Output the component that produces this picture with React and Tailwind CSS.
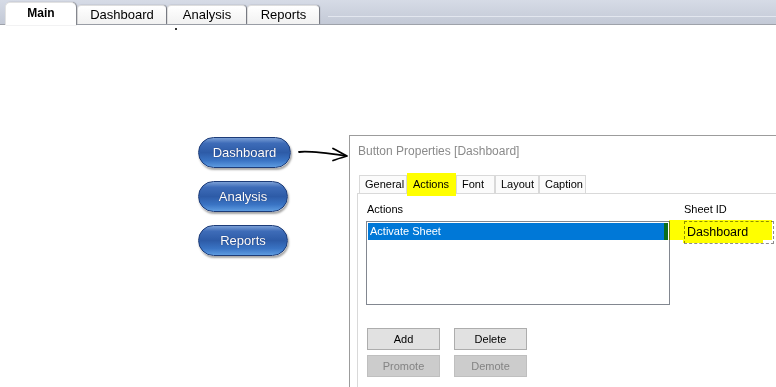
import React from "react";

function TopTab({ label, active, w }) {
  if (active) {
    return (
      <div
        className={`relative z-10 ${w} h-[23px] mb-[-1px] rounded-t-[5px] bg-white border-l border-t border-[#e2e2e2] shadow-[1px_0_1px_#7d7f86] flex items-center justify-center text-[12px] font-bold text-black pb-[2px]`}
      >
        {label}
      </div>
    );
  }
  return (
    <div
      className={`${w} h-[19px] rounded-t-[4px] bg-[linear-gradient(to_bottom,#ffffff,#f1f1f1)] border-l border-t border-[#dedede] shadow-[1px_0_1px_#6e7078] flex items-center justify-center text-[13px] text-black`}
    >
      {label}
    </div>
  );
}

function Pill({ label, w }) {
  return (
    <div
      className={`${w} h-[31px] rounded-full border border-[#1d3c78] bg-[linear-gradient(to_bottom,#7a9fd6_0%,#3e6cb8_18%,#2d5ba7_50%,#3a74c4_78%,#5d9be0_100%)] shadow-[1px_2px_2px_rgba(0,0,0,0.35)] flex items-center justify-center text-[13px] text-white [text-shadow:0_0_1px_rgba(0,0,40,0.6)]`}
    >
      {label}
    </div>
  );
}

function DlgTab({ label, w, selected }) {
  if (selected) {
    return (
      <div
        className={`relative z-10 ${w} h-[23px] mb-[-3px] bg-[#ffff00] flex items-start pt-[3px] pl-[6px] text-[11px] text-black`}
      >
        {label}
      </div>
    );
  }
  return (
    <div
      className={`${w} h-[18px] border-l border-t border-r border-[#d9d9d9] bg-[#fbfbfb] flex items-center pl-[5px] text-[11px] text-black`}
    >
      {label}
    </div>
  );
}

function Btn({ label, disabled }) {
  return (
    <div
      className={
        disabled
          ? "w-[73px] h-[22px] border border-[#bfbfbf] bg-[#cccccc] flex items-center justify-center text-[11px] text-[#838383]"
          : "w-[73px] h-[22px] border border-[#adadad] bg-[#e1e1e1] flex items-center justify-center text-[11px] text-black"
      }
    >
      {label}
    </div>
  );
}

export default function App() {
  return (
    <div className="relative w-[776px] h-[387px] overflow-hidden bg-white font-['Liberation_Sans',Arial,sans-serif]">
      {/* top tab bar */}
      <div className="h-[25px] flex items-end gap-[1px] pl-[5px] border-b border-[#9ea2aa] bg-[linear-gradient(to_bottom,#d6dbe6,#c3c9d6)]">
        <TopTab label="Main" active w="w-[71px]" />
        <TopTab label="Dashboard" w="w-[89px]" />
        <TopTab label="Analysis" w="w-[79px]" />
        <TopTab label="Reports" w="w-[72px]" />
        <div className="flex-1 self-start mt-[16px] ml-[8px] h-px bg-[#e3e7ef]" />
      </div>
      <div className="absolute left-[175px] top-[28px] w-[2px] h-[2px] bg-[#333]" />

      {/* main area */}
      <div className="flex pl-[198px] pt-[110px] h-[362px]">
        <div className="flex flex-col w-[92px] mt-[2px] gap-[13px]">
          <Pill label="Dashboard" w="w-[93px]" />
          <Pill label="Analysis" w="w-[90px]" />
          <Pill label="Reports" w="w-[90px]" />
        </div>

        <svg width="59" height="20" viewBox="0 0 59 20" className="mt-[12px] shrink-0">
          <path d="M9 5 C 20 3.5, 36 6, 56 9" fill="none" stroke="#000" strokeWidth="1.8" strokeLinecap="round" />
          <path d="M43 1.5 C 48 4, 52 6.5, 57 9 C 52 10.5, 47 12, 43 13.5" fill="none" stroke="#000" strokeWidth="1.8" strokeLinecap="round" strokeLinejoin="round" />
        </svg>

        {/* dialog */}
        <div className="flex-1 self-stretch border-l border-t border-[#9c9c9c] bg-white flex flex-col">
          <div className="h-[30px] pl-[8px] flex items-center text-[12px] text-[#8a8a8a]">
            Button Properties [Dashboard]
          </div>
          <div className="flex-1 flex flex-col pl-[7px] pt-[7px]">
            <div className="flex items-end h-[20px] pl-[2px]">
              <DlgTab label="General" w="w-[48px]" />
              <DlgTab label="Actions" w="w-[49px]" selected />
              <DlgTab label="Font" w="w-[39px]" />
              <DlgTab label="Layout" w="w-[44px]" />
              <DlgTab label="Caption" w="w-[47px]" />
            </div>
            <div className="flex-1 border-l border-t border-[#d9d9d9] pl-[8px] pt-[8px]">
              <div className="flex">
                <div className="w-[304px]">
                  <div className="h-[19px] pl-[1px] text-[11px] text-black leading-[14px]">Actions</div>
                  <div className="h-[84px] border border-[#828790] p-px bg-white">
                    <div className="h-[17px] bg-[#0078d7] flex items-center">
                      <span className="flex-1 pl-[2px] text-[11px] text-white">Activate Sheet</span>
                      <span className="w-[4px] h-full bg-[#0b6e1e]" />
                    </div>
                  </div>
                </div>
                <div className="relative ml-[14px]">
                  <div className="h-[19px] text-[11px] text-black leading-[14px]">Sheet ID</div>
                  <div className="w-[90px] h-[23px] border border-dashed border-[#8d8d8d] flex items-center pl-[2px] text-[12.5px] text-black">
                    Dashboard
                  </div>
                  <div className="absolute z-10 left-[-15px] top-[18px] w-[103px] h-[20px] bg-[#ffff00] mix-blend-multiply" />
                  <div className="absolute z-10 left-[-1px] top-[38px] w-[80px] h-[3px] bg-[#ffff00] mix-blend-multiply" />
                </div>
              </div>
              <div className="mt-[23px] pl-[1px] flex flex-col gap-[5px]">
                <div className="flex gap-[14px]">
                  <Btn label="Add" />
                  <Btn label="Delete" />
                </div>
                <div className="flex gap-[14px]">
                  <Btn label="Promote" disabled />
                  <Btn label="Demote" disabled />
                </div>
              </div>
            </div>
          </div>
        </div>
      </div>
    </div>
  );
}
